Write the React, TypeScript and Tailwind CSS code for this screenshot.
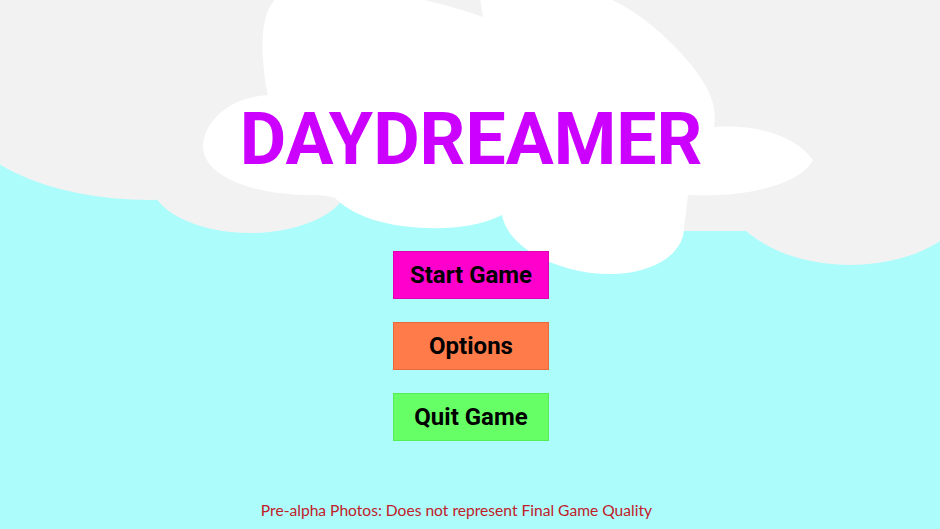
import React from "react";

function Sky() {
  return (
    <svg
      className="absolute inset-0"
      width={940}
      height={529}
      viewBox="0 0 940 529"
      aria-hidden="true"
    >
      <g fill="#f2f2f2">
        <rect x={0} y={0} width={940} height={150} />
        <ellipse cx={150} cy={108} rx={190} ry={92} />
        <ellipse cx={250} cy={180} rx={100} ry={53} />
        <rect x={600} y={0} width={160} height={231} />
        <ellipse cx={850} cy={180} rx={130} ry={85} />
      </g>
      <path
        fill="#ffffff"
        d="M 277 -2 L 417 -2 C 440 4, 465 10, 483 17 L 480 -2 L 607 -2 C 640 10, 690 55, 708 90 C 714 103, 716 115, 714 127 C 755 124, 795 135, 813 160 C 800 185, 745 198, 688 195 L 684 228 C 684 250, 660 272, 615 274 C 565 276, 508 250, 502 215 C 480 226, 452 229, 428 228 C 390 227, 355 218, 335 198 C 330 196, 320 195, 313 195 C 250 195, 202 175, 203 145 C 205 120, 230 97, 268 95 C 262 70, 261 35, 265 20 C 268 8, 272 2, 277 -2 Z"
      />
    </svg>
  );
}

function MenuButton({ label, color }: { label: string; color: string }) {
  return (
    <button
      className={`flex h-[48px] w-[156px] items-center justify-center text-[24px] font-bold leading-none text-black ${color}`}
      style={{ fontFamily: "Roboto, 'Liberation Sans', sans-serif" }}
    >
      {label}
    </button>
  );
}

export default function App() {
  return (
    <div className="relative h-[529px] w-[940px] overflow-hidden bg-[#adfcfc]">
      <Sky />
      <div className="relative flex flex-col items-center pt-[104px]">
        <h1
          className="ml-[2px] text-[71.5px] font-bold leading-none text-[#cc00ff]"
          style={{ fontFamily: "Roboto, 'Liberation Sans', sans-serif" }}
        >
          DAYDREAMER
        </h1>
        <div className="ml-[2px] mt-[75.5px] flex flex-col gap-[23px]">
          <MenuButton label="Start Game" color="bg-[#ff00cc] border border-[#e000b0]" />
          <MenuButton label="Options" color="bg-[#ff7c4a] border border-[#e86a3c]" />
          <MenuButton label="Quit Game" color="bg-[#66ff66] border border-[#55ee55]" />
        </div>
        <p
          className="mr-[27px] mt-[62px] text-[15.6px] leading-none text-[#c0202a]"
          style={{ fontFamily: "Lato, 'Liberation Sans', sans-serif" }}
        >
          Pre-alpha Photos: Does not represent Final Game Quality
        </p>
      </div>
    </div>
  );
}
